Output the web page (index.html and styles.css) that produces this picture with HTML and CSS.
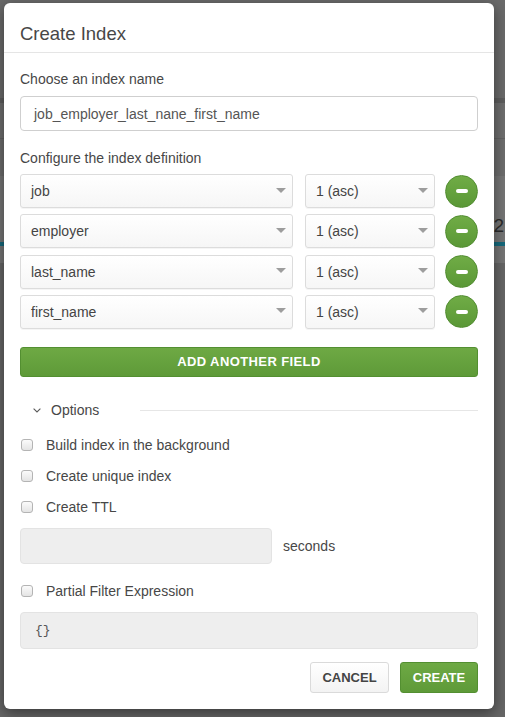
FILE: index.html
```html
<!DOCTYPE html>
<html>
<head>
<meta charset="utf-8">
<title>Create Index</title>
<link rel="stylesheet" href="styles.css">
</head>
<body>
<div class="backdrop">
  <div class="band band-top"></div>
  <div class="band band-dark"></div>
  <div class="band band-mid"></div>
  <div class="band band-line"></div>
  <div class="band band-mid2"></div>
  <div class="band band-light"><span class="peek">52</span></div>
  <div class="band band-teal"></div>
  <div class="band band-light2"></div>
  <div class="band band-rest"></div>
</div>

<div class="modal">
  <div class="modal-header">
    <h4 class="modal-title">Create Index</h4>
  </div>
  <div class="modal-body">
    <p class="label">Choose an index name</p>
    <div class="text-input">job_employer_last_nane_first_name</div>

    <p class="label label-def">Configure the index definition</p>
    <div class="fields">
      <div class="field-row">
        <div class="select"><span>job</span><i class="caret"></i></div>
        <div class="select"><span>1 (asc)</span><i class="caret"></i></div>
        <button class="remove" type="button"><span class="bar"></span></button>
      </div>
      <div class="field-row">
        <div class="select"><span>employer</span><i class="caret"></i></div>
        <div class="select"><span>1 (asc)</span><i class="caret"></i></div>
        <button class="remove" type="button"><span class="bar"></span></button>
      </div>
      <div class="field-row">
        <div class="select"><span>last_name</span><i class="caret"></i></div>
        <div class="select"><span>1 (asc)</span><i class="caret"></i></div>
        <button class="remove" type="button"><span class="bar"></span></button>
      </div>
      <div class="field-row">
        <div class="select"><span>first_name</span><i class="caret"></i></div>
        <div class="select"><span>1 (asc)</span><i class="caret"></i></div>
        <button class="remove" type="button"><span class="bar"></span></button>
      </div>
    </div>

    <button class="add-field" type="button">ADD ANOTHER FIELD</button>

    <div class="options-head">
      <svg class="chevron" width="8" height="5" viewBox="0 0 8 5"><path d="M0.6 0.6 L4 4 L7.4 0.6" fill="none" stroke="#5a5a5a" stroke-width="1.1"/></svg>
      <span class="options-title">Options</span>
      <span class="options-line"></span>
    </div>

    <div class="checks">
      <label class="check-row"><span class="checkbox"></span>Build index in the background</label>
      <label class="check-row"><span class="checkbox"></span>Create unique index</label>
      <label class="check-row"><span class="checkbox"></span>Create TTL</label>
    </div>

    <div class="ttl-row">
      <div class="ttl-input"></div>
      <span class="seconds">seconds</span>
    </div>

    <label class="check-row partial"><span class="checkbox"></span>Partial Filter Expression</label>
    <div class="filter-input">{}</div>
  </div>
  <div class="modal-footer">
    <button class="btn btn-cancel" type="button">CANCEL</button>
    <button class="btn btn-create" type="button">CREATE</button>
  </div>
</div>
</body>
</html>
```

FILE: styles.css
```css
* { box-sizing: border-box; }

html, body {
  margin: 0;
  padding: 0;
  width: 505px;
  height: 717px;
  overflow: hidden;
  background: #666;
  font-family: "Liberation Sans", Arial, sans-serif;
}

/* underlying (dimmed) page */
.backdrop {
  display: flex;
  flex-direction: column;
  height: 717px;
}
.band { flex: none; }
.band-top { height: 98px; background: #6a6a6a; }
.band-dark { height: 5px; background: #5d5d5d; }
.band-mid { height: 35px; background: #6e6e6e; }
.band-line { height: 1px; background: #626262; }
.band-mid2 { height: 37px; background: #6d6d6d; }
.band-light {
  height: 66px;
  background: #757575;
  display: flex;
  justify-content: flex-end;
  align-items: flex-end;
  padding-bottom: 7px;
}
.peek {
  font-size: 19px;
  color: #2b2b2b;
  margin-right: 1px;
  line-height: 18px;
}
.band-teal { height: 4px; background: #16697c; }
.band-light2 { height: 17px; background: #757575; }
.band-rest { flex: 1; background: #666; }

/* modal */
.modal {
  position: absolute;
  left: 4px;
  top: 3px;
  width: 490px;
  background: #fff;
  border-radius: 6px;
  box-shadow: 0 4px 14px rgba(0, 0, 0, 0.45);
}

.modal-header {
  padding: 20px 16px 7px;
  border-bottom: 1px solid #e5e5e5;
}
.modal-title {
  margin: 0;
  font-size: 18.5px;
  line-height: 22px;
  font-weight: normal;
  color: #474747;
}

.modal-body {
  padding: 16px 16px 0;
  display: flex;
  flex-direction: column;
}

.label {
  margin: 0 0 7px;
  font-size: 14px;
  line-height: 20px;
  color: #474747;
}
.label-def {
  margin-top: 17px;
  margin-bottom: 6px;
}

.text-input {
  height: 35px;
  border: 1px solid #cfcfcf;
  border-radius: 4px;
  padding: 0 13px;
  display: flex;
  align-items: center;
  font-size: 14px;
  color: #555;
}

.fields {
  display: flex;
  flex-direction: column;
  gap: 6.33px;
}
.field-row {
  display: grid;
  grid-template-columns: 273px 130px 33px;
  column-gap: 12px;
  align-items: center;
}
.field-row .remove { margin-left: -2px; }

.select {
  height: 34px;
  border: 1px solid #dcdcdc;
  border-radius: 3px;
  background: linear-gradient(#ffffff, #f6f6f6);
  box-shadow: 0 1px 0 rgba(0, 0, 0, 0.04);
  display: flex;
  align-items: center;
  justify-content: space-between;
  padding: 0 6px 0 10px;
  font-size: 14px;
  color: #444;
}
.caret {
  width: 0;
  height: 0;
  border-left: 5px solid transparent;
  border-right: 5px solid transparent;
  border-top: 5px solid #9d9d9d;
  margin-top: -2px;
}

.remove {
  width: 33px;
  height: 33px;
  padding: 0;
  border-radius: 50%;
  border: 1px solid #528d31;
  background: linear-gradient(#70ac46, #5a9836);
  display: flex;
  align-items: center;
  justify-content: center;
}
.bar {
  width: 12px;
  height: 4px;
  border-radius: 2px;
  background: #fff;
}

.add-field {
  margin-top: 18px;
  height: 30px;
  border: 1px solid #538f31;
  border-radius: 3px;
  background: linear-gradient(#6ea944, #5e9a38);
  color: #fff;
  font-family: "Liberation Sans", Arial, sans-serif;
  font-weight: bold;
  font-size: 13px;
  letter-spacing: 0.4px;
  padding: 0;
}

.options-head {
  margin-top: 23px;
  height: 20px;
  display: flex;
  align-items: center;
  padding-left: 13px;
}
.chevron { flex: none; margin-right: 10px; margin-top: 1px; }
.options-title {
  font-size: 14px;
  color: #474747;
}
.options-line {
  flex: 1;
  height: 1px;
  background: #e6e6e6;
  margin-left: 41px;
  margin-top: 1px;
}

.checks {
  margin-top: 15px;
  display: flex;
  flex-direction: column;
  gap: 11px;
}
.check-row {
  display: flex;
  align-items: center;
  height: 20px;
  font-size: 14px;
  color: #474747;
}
.checkbox {
  flex: none;
  width: 12px;
  height: 12px;
  margin: 1px 13px 0 1px;
  border: 1px solid #b4b4b4;
  border-radius: 3px;
  background: linear-gradient(#fbfbfb, #e4e4e4);
}

.ttl-row {
  margin-top: 11px;
  display: flex;
  align-items: center;
}
.ttl-input {
  width: 252px;
  height: 36px;
  border: 1px solid #e3e3e3;
  border-radius: 4px;
  background: #eeeeee;
}
.seconds {
  margin-left: 11px;
  font-size: 14px;
  color: #474747;
}

.partial { margin-top: 17px; }

.filter-input {
  margin-top: 11px;
  height: 37px;
  border: 1px solid #e3e3e3;
  border-radius: 4px;
  background: #eeeeee;
  display: flex;
  align-items: center;
  padding-left: 14px;
  font-family: "Liberation Mono", "DejaVu Sans Mono", monospace;
  font-size: 13px;
  color: #555;
}

.modal-footer {
  padding: 13px 16px 16px;
  display: flex;
  justify-content: flex-end;
  gap: 11px;
}
.btn {
  height: 31px;
  border-radius: 3px;
  font-family: "Liberation Sans", Arial, sans-serif;
  font-size: 13px;
  font-weight: bold;
  padding: 0;
}
.btn-cancel {
  width: 79px;
  border: 1px solid #dadada;
  background: linear-gradient(#ffffff, #f3f3f3);
  color: #444;
}
.btn-create {
  width: 78px;
  border: 1px solid #538f31;
  background: linear-gradient(#6ea944, #5e9a38);
  color: #fff;
}
```
